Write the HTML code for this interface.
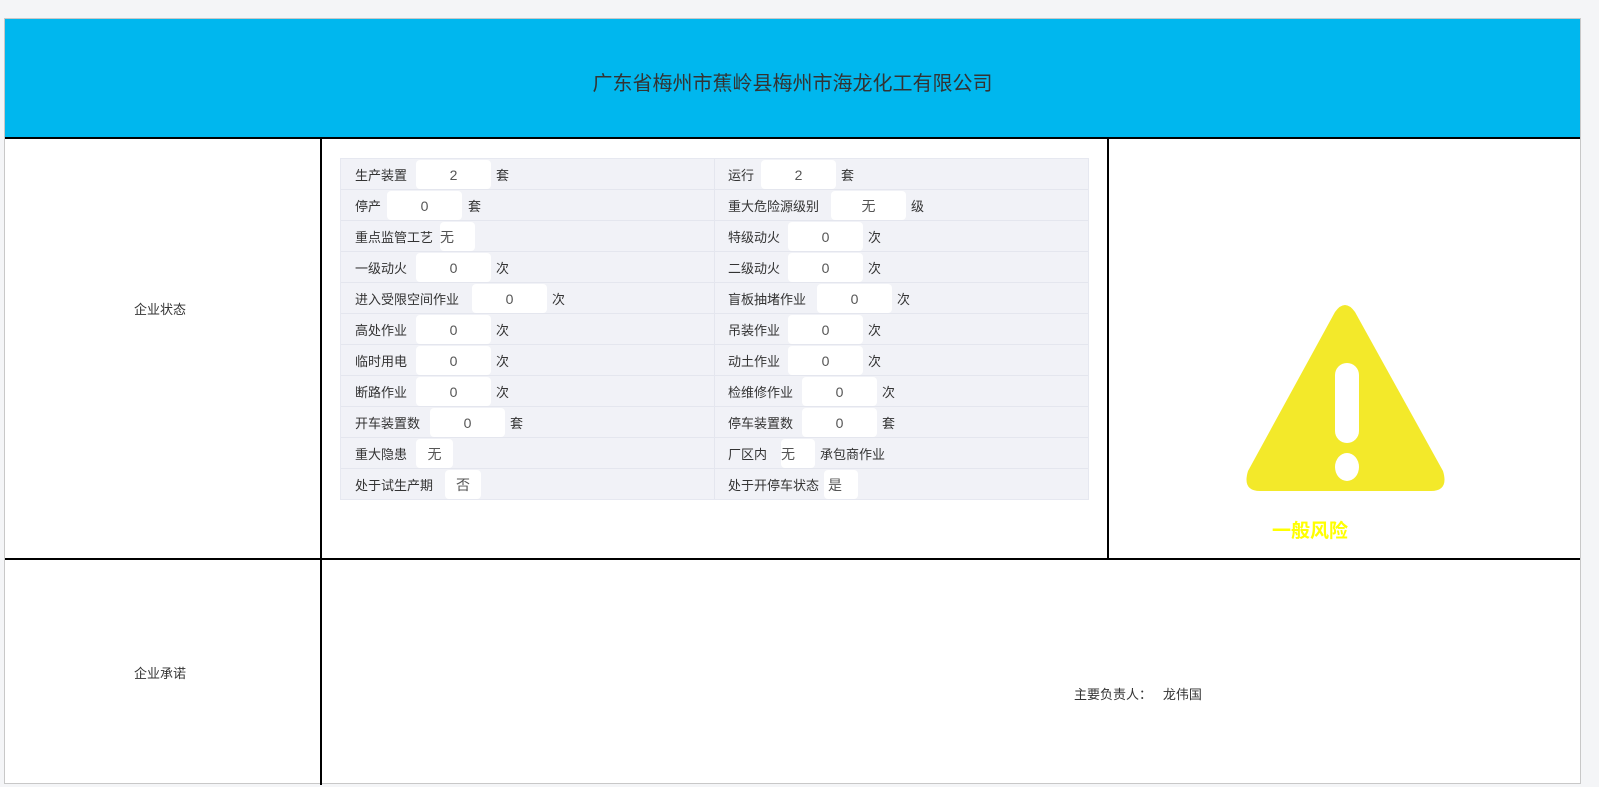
<!DOCTYPE html>
<html><head><meta charset="utf-8"><style>
*{margin:0;padding:0;box-sizing:border-box}
body{width:1599px;height:787px;background:#f4f5f7;font-family:"Liberation Sans","Noto Sans CJK SC",sans-serif;font-size:13px;color:#333;position:relative;overflow:hidden}
.a{position:absolute}
.box{left:4px;top:18px;width:1577px;height:766px;background:#fff;border:1px solid #c8c8c8}
.hdr{left:5px;top:19px;width:1575px;height:118px;background:#00b7ee}
.title{left:5px;width:1575px;top:67px;text-align:center;font-size:20px;color:#333}
.hl{background:#000;height:2px}
.vl{background:#000;width:2px}
.tbl{left:340px;top:158px;width:749px;height:342px;background:#f1f2f7;border:1px solid #e6e8f0}
.row{position:absolute;left:0;width:747px;height:31px;border-bottom:1px solid #e4e6ee}
.mid{left:373px;top:0;width:1px;height:340px;background:#e4e6ee}
.lb{position:absolute;top:6px;white-space:nowrap}
.in{position:absolute;top:1px;height:29px;width:75px;background:#fff;border-radius:4px;text-align:center;line-height:31px;font-size:14px;color:#555}
</style></head><body>
<div class="a box"></div>
<div class="a hdr"></div>
<div class="a title">广东省梅州市蕉岭县梅州市海龙化工有限公司</div>
<div class="a hl" style="left:5px;top:137px;width:1575px"></div>
<div class="a hl" style="left:5px;top:558px;width:1575px"></div>
<div class="a vl" style="left:320px;top:137px;height:648px"></div>
<div class="a vl" style="left:1107px;top:137px;height:422px"></div>
<div class="a" style="left:134px;top:299px">企业状态</div>
<div class="a" style="left:134px;top:663px">企业承诺</div>
<div class="a" style="left:1074px;top:684px">主要负责人：&nbsp;&nbsp;&nbsp;龙伟国</div>

<div class="a tbl">
<div class="a mid"></div>
<div class="row" style="top:0"><span class="lb" style="left:14px">生产装置</span><span class="in" style="left:75px">2</span><span class="lb" style="left:155px">套</span><span class="lb" style="left:387px">运行</span><span class="in" style="left:420px">2</span><span class="lb" style="left:500px">套</span></div>
<div class="row" style="top:31px"><span class="lb" style="left:14px">停产</span><span class="in" style="left:46px">0</span><span class="lb" style="left:127px">套</span><span class="lb" style="left:387px">重大危险源级别</span><span class="in" style="left:490px">无</span><span class="lb" style="left:570px">级</span></div>
<div class="row" style="top:62px"><span class="lb" style="left:14px">重点监管工艺</span><span class="in" style="left:99px;width:35px;text-align:left">无</span><span class="lb" style="left:387px">特级动火</span><span class="in" style="left:447px">0</span><span class="lb" style="left:527px">次</span></div>
<div class="row" style="top:93px"><span class="lb" style="left:14px">一级动火</span><span class="in" style="left:75px">0</span><span class="lb" style="left:155px">次</span><span class="lb" style="left:387px">二级动火</span><span class="in" style="left:447px">0</span><span class="lb" style="left:527px">次</span></div>
<div class="row" style="top:124px"><span class="lb" style="left:14px">进入受限空间作业</span><span class="in" style="left:131px">0</span><span class="lb" style="left:211px">次</span><span class="lb" style="left:387px">盲板抽堵作业</span><span class="in" style="left:476px">0</span><span class="lb" style="left:556px">次</span></div>
<div class="row" style="top:155px"><span class="lb" style="left:14px">高处作业</span><span class="in" style="left:75px">0</span><span class="lb" style="left:155px">次</span><span class="lb" style="left:387px">吊装作业</span><span class="in" style="left:447px">0</span><span class="lb" style="left:527px">次</span></div>
<div class="row" style="top:186px"><span class="lb" style="left:14px">临时用电</span><span class="in" style="left:75px">0</span><span class="lb" style="left:155px">次</span><span class="lb" style="left:387px">动土作业</span><span class="in" style="left:447px">0</span><span class="lb" style="left:527px">次</span></div>
<div class="row" style="top:217px"><span class="lb" style="left:14px">断路作业</span><span class="in" style="left:75px">0</span><span class="lb" style="left:155px">次</span><span class="lb" style="left:387px">检维修作业</span><span class="in" style="left:461px">0</span><span class="lb" style="left:541px">次</span></div>
<div class="row" style="top:248px"><span class="lb" style="left:14px">开车装置数</span><span class="in" style="left:89px">0</span><span class="lb" style="left:169px">套</span><span class="lb" style="left:387px">停车装置数</span><span class="in" style="left:461px">0</span><span class="lb" style="left:541px">套</span></div>
<div class="row" style="top:279px"><span class="lb" style="left:14px">重大隐患</span><span class="in" style="left:75px;width:37px">无</span><span class="lb" style="left:387px">厂区内</span><span class="in" style="left:440px;width:34px;text-align:left">无</span><span class="lb" style="left:479px">承包商作业</span></div>
<div class="row" style="top:310px;border-bottom:0"><span class="lb" style="left:14px">处于试生产期</span><span class="in" style="left:104px;width:36px">否</span><span class="lb" style="left:387px">处于开停车状态</span><span class="in" style="left:483px;width:34px;text-align:left;padding-left:4px">是</span></div>
</div>

<svg class="a" style="left:1243px;top:301px" width="205" height="195" viewBox="0 0 205 195">
<path d="M92 11 Q102 -3 112 11 L200 170 Q206 190 188 190 L17 190 Q-1 190 5 170 Z" fill="#f3e92a"/>
<rect x="92" y="62" width="24" height="80" rx="12" fill="#fff"/>
<ellipse cx="104" cy="166" rx="12" ry="14" fill="#fff"/>
</svg>
<div class="a" style="left:1272px;top:516px;font-size:19px;font-weight:bold;color:#ffff00">一般风险</div>
</body></html>
